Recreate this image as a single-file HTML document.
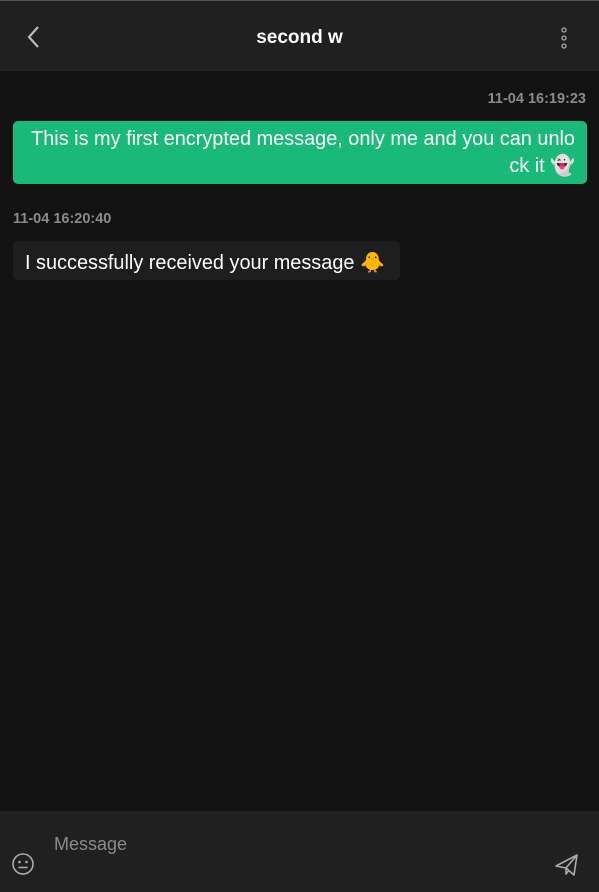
<!DOCTYPE html>
<html><head><meta charset="utf-8"><style>
*{margin:0;padding:0;box-sizing:border-box}
body{width:599px;height:892px;background:#121212;font-family:"Liberation Sans",Roboto,sans-serif;position:relative;overflow:hidden;color:#fff}
.hdr{position:absolute;left:0;top:0;width:599px;height:71px;background:#202020;border-top:1px solid #555}
.title{position:absolute;left:0;right:0;top:26px;text-align:center;font-weight:bold;font-size:19px}
.ts{position:absolute;font-size:14.5px;font-weight:bold;color:#8a8a8a}
.b1{position:absolute;left:13px;top:121px;width:574px;height:63px;background:#19b97a;border-radius:5px;font-size:19.9px;text-align:right;padding:5px 12px 0 12px;line-height:27px;white-space:nowrap}
.b2{position:absolute;left:13px;top:241px;width:387px;height:39px;background:#1e1e1e;border-radius:5px;font-size:19.9px;padding:10px 12px;line-height:24px;white-space:nowrap}
.ftr{position:absolute;left:0;top:811px;width:599px;height:81px;background:#202020}
</style></head><body>
<div class="hdr">
<svg style="position:absolute;left:26px;top:24px" width="16" height="24" viewBox="0 0 16 24"><path d="M12 2 L3 12 L12 22" stroke="#bbb" stroke-width="2.2" fill="none"/></svg>
<div class="title">second w</div>
<svg style="position:absolute;left:559px;top:25px" width="10" height="24" viewBox="0 0 10 24"><circle cx="5" cy="4" r="2" stroke="#aaa" stroke-width="1.3" fill="none"/><circle cx="5" cy="12" r="2" stroke="#aaa" stroke-width="1.3" fill="none"/><circle cx="5" cy="20" r="2" stroke="#aaa" stroke-width="1.3" fill="none"/></svg>
</div>
<div class="ts" style="right:13px;top:91px">11-04 16:19:23</div>
<div class="b1">This is my first encrypted message, only me and you can unlo<br>ck it 👻</div>
<div class="ts" style="left:13px;top:211px">11-04 16:20:40</div>
<div class="b2">I successfully received your message 🐥</div>
<div class="ftr">
<div style="position:absolute;left:54px;top:23px;font-size:18px;color:#8a8a8a">Message</div>
<svg style="position:absolute;left:11px;top:41px" width="24" height="24" viewBox="0 0 24 24"><circle cx="12" cy="12" r="10" stroke="#aaa" stroke-width="1.6" fill="none"/><circle cx="8.5" cy="10" r="1.3" fill="#aaa"/><circle cx="15.5" cy="10" r="1.3" fill="#aaa"/><path d="M7.5 15.5 H16.5" stroke="#aaa" stroke-width="1.6"/></svg>
<svg style="position:absolute;left:554px;top:41px" width="26" height="26" viewBox="0 0 26 26"><path d="M2 14 L23 3 L20 23 L12 16 Z M12 16 L23 3 M12 16 L12 22 L15 18" stroke="#aaa" stroke-width="1.6" fill="none" stroke-linejoin="round"/></svg>
</div>
</body></html>
